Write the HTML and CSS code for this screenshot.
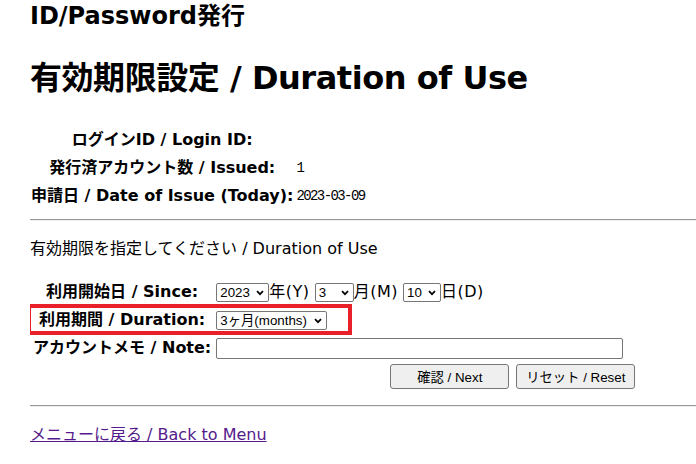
FILE: index.html
```html
<!DOCTYPE html>
<html lang="ja">
<head>
<meta charset="utf-8">
<title>ID/Password発行</title>
<link rel="stylesheet" href="styles.css">
</head>
<body>
<h2 class="page-title">ID/Password発行</h2>
<h1 class="main-title">有効期限設定 / Duration of Use</h1>
<table class="info">
  <tr><th>ログインID / Login ID:</th><td class="val"></td></tr>
  <tr><th>発行済アカウント数 / Issued:</th><td class="val">1</td></tr>
  <tr><th>申請日 / Date of Issue (Today):</th><td class="val">2023-03-09</td></tr>
</table>
<hr class="rule rule-top">
<p class="lead">有効期限を指定してください / Duration of Use</p>
<div class="form-wrap">
  <table class="form">
    <tr>
      <th>利用開始日 / Since:</th>
      <td><span class="sel sel-year" role="listbox"><span class="sel-text">2023</span><svg class="chev" width="8" height="6" viewBox="0 0 8 6"><path d="M1 1.2L4 4.2L7 1.2" fill="none" stroke="#000" stroke-width="1.7"/></svg></span><span class="unit">年(Y)</span> <span class="sel sel-month" role="listbox"><span class="sel-text">3</span><svg class="chev" width="8" height="6" viewBox="0 0 8 6"><path d="M1 1.2L4 4.2L7 1.2" fill="none" stroke="#000" stroke-width="1.7"/></svg></span><span class="unit">月(M)</span> <span class="sel sel-day" role="listbox"><span class="sel-text">10</span><svg class="chev" width="8" height="6" viewBox="0 0 8 6"><path d="M1 1.2L4 4.2L7 1.2" fill="none" stroke="#000" stroke-width="1.7"/></svg></span><span class="unit">日(D)</span></td>
    </tr>
    <tr>
      <th>利用期間 / Duration:</th>
      <td><span class="sel sel-dur" role="listbox"><span class="sel-text">3ヶ月(months)</span><svg class="chev" width="8" height="6" viewBox="0 0 8 6"><path d="M1 1.2L4 4.2L7 1.2" fill="none" stroke="#000" stroke-width="1.7"/></svg></span></td>
    </tr>
    <tr>
      <th>アカウントメモ / Note:</th>
      <td><input class="note" type="text"></td>
    </tr>
    <tr>
      <td></td>
      <td class="actions"><button class="btn" type="button">確認 / Next</button><button class="btn" type="button">リセット / Reset</button></td>
    </tr>
  </table>
  <div class="highlight"></div>
</div>
<hr class="rule rule-bottom">
<p class="back"><a class="back-link" href="#">メニューに戻る / Back to Menu</a></p>
</body>
</html>
```

FILE: styles.css
```css
html, body {
  background: #fff;
}
body {
  margin: 0 0 0 30px;
  font-family: "DejaVu Sans", "Noto Sans CJK JP", sans-serif;
  font-size: 16px;
  line-height: 24px;
  color: #000;
}
.page-title {
  font-size: 24px;
  line-height: 32px;
  font-weight: bold;
  margin: 0 0 24px;
}
.main-title {
  font-size: 32px;
  line-height: 44px;
  font-weight: bold;
  letter-spacing: -0.45px;
  margin: 0 0 25px;
}
.info, .form {
  border-collapse: separate;
  border-spacing: 2px;
  margin: 0 0 0 -2px;
}
.info th, .info td, .form th, .form td {
  padding: 1px;
  line-height: 24px;
  vertical-align: middle;
}
.form th {
  padding: 1px 2px 1px 3px;
}
.info th, .form th {
  font-weight: bold;
  text-align: center;
  white-space: nowrap;
}
.info td.val {
  font-family: "Liberation Mono", monospace;
  font-size: 14px;
  letter-spacing: -1.6px;
  padding-left: 0;
}
.rule {
  border: 0;
  border-top: 1px solid #9a9a9a;
  border-bottom: 1px solid #eeeeee;
  height: 0;
  margin: 0;
}
.rule-top {
  margin-top: 8px;
}
.lead {
  margin: 16px 0;
}
.form-wrap {
  position: relative;
}
.form td {
  white-space: nowrap;
}
.unit {
  letter-spacing: 0.5px;
}
.sel {
  display: inline-flex;
  align-items: center;
  justify-content: space-between;
  box-sizing: border-box;
  height: 19px;
  padding: 0 4px 0 3px;
  border: 1px solid #767676;
  border-radius: 2px;
  background: #fff;
  vertical-align: middle;
  font-family: "Liberation Sans", "Noto Sans CJK JP", sans-serif;
  font-size: 13.33px;
  line-height: 17px;
  color: #000;
}
.sel-text {
  white-space: nowrap;
}
.chev {
  display: block;
  flex: none;
}
.sel-year { width: 53px; }
.sel-month { width: 39px; }
.sel-day { width: 38px; }
.sel-dur { width: 111px; }
.note {
  width: 407px;
  height: 21px;
  box-sizing: border-box;
  border: 1px solid #767676;
  border-radius: 2px;
  padding: 1px 2px;
  margin: 0;
  vertical-align: middle;
  font-size: 13.33px;
}
.actions {
  text-align: right;
  width: 419px;
}
.btn {
  width: 119px;
  height: 25px;
  margin: 0 0 0 7px;
  padding: 0;
  box-sizing: border-box;
  background: #efefef;
  border: 1px solid #767676;
  border-radius: 3px;
  font-family: "Liberation Sans", "Noto Sans CJK JP", sans-serif;
  font-size: 13.33px;
  color: #000;
  vertical-align: middle;
}
.highlight {
  position: absolute;
  left: -3px;
  top: 27px;
  width: 325px;
  height: 31px;
  box-sizing: border-box;
  border: 4px solid #e8202a;
  pointer-events: none;
}
.rule-bottom {
  margin-top: 13px;
}
.back {
  margin: 16px 0 0;
}
.back-link {
  color: #551a8b;
  text-decoration: underline;
}
```
